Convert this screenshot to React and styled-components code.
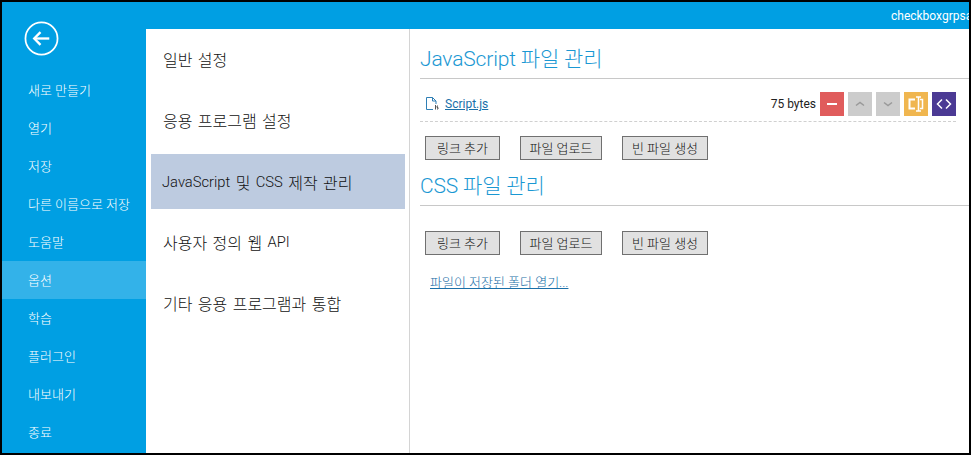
import React from 'react';
import styled, { createGlobalStyle } from 'styled-components';

const GlobalStyle = createGlobalStyle`
    html, body {
        margin: 0;
        padding: 0;
        background: #000;
    }
    body {
        font-family: Roboto, "Noto Sans CJK KR", sans-serif;
    }
    * {
        box-sizing: border-box;
    }
`;

const Frame = styled.div`
    width: 971px;
    height: 455px;
    padding: 2px;
    background: #000;
    overflow: hidden;
`;

const Window = styled.div`
    width: 100%;
    height: 100%;
    display: flex;
    background: #fff;
    overflow: hidden;
`;

const Sidebar = styled.nav`
    width: 144px;
    flex: none;
    background: #009fe3;
    display: flex;
    flex-direction: column;
`;

const BackWrap = styled.div`
    height: 69px;
    padding: 19px 0 0 22px;
`;

const BackButton = styled.button`
    width: 35px;
    height: 35px;
    padding: 0;
    background: none;
    border: none;
    display: block;
`;

const SideItem = styled.div`
    height: 38px;
    padding: 0 0 2px 26px;
    display: flex;
    align-items: center;
    color: #fff;
    font-size: 13px;
    font-weight: 300;
    background: ${props => (props.active ? '#33b2e9' : 'transparent')};
`;

const Main = styled.div`
    flex: 1;
    min-width: 0;
    display: flex;
    flex-direction: column;
`;

const TopBar = styled.div`
    height: 27px;
    flex: none;
    background: #009fe3;
    color: #fff;
    font-size: 12px;
    white-space: nowrap;
    overflow: hidden;
    padding: 6px 0 0 745px;
    line-height: 16px;
`;

const Body = styled.div`
    flex: 1;
    display: flex;
    min-height: 0;
`;

const SettingsNav = styled.div`
    width: 264px;
    flex: none;
    border-right: 1px solid #d4d4d4;
    padding: 3px 4px 0 5px;
    display: flex;
    flex-direction: column;
    gap: 6px;
`;

const NavItem = styled.div`
    height: 55px;
    padding: 0 0 ${props => (props.selected ? '0' : '2px')} ${props => (props.selected ? '11px' : '12px')};
    display: flex;
    align-items: center;
    font-size: 16px;
    font-weight: 300;
    word-spacing: 1.5px;
    white-space: pre;
    color: #111;
    background: ${props => (props.selected ? '#bdcbe0' : 'transparent')};
`;

const Latin = styled.span`
    font-size: 0.92em;
`;

const Content = styled.div`
    flex: 1;
    min-width: 0;
    padding: 17px 0 0 10px;
`;

const Heading = styled.h2`
    margin: 0;
    height: 33px;
    font-size: 21px;
    font-weight: 300;
    line-height: 26px;
    letter-spacing: -0.15px;
    color: #1b98d3;
    border-bottom: 1px solid #c8c8c8;
`;

const FileRow = styled.div`
    height: 43px;
    margin-right: 13px;
    padding: 13px 0 5px 5px;
    display: flex;
    align-items: center;
    justify-content: space-between;
    border-bottom: 1px dashed #d0d0d0;
`;

const FileName = styled.div`
    display: flex;
    align-items: center;
    gap: 5px;
`;

const FileLink = styled.a`
    color: #1a6fa8;
    text-decoration: underline;
    font-size: 12px;
`;

const FileTools = styled.div`
    display: flex;
    align-items: center;
    gap: 4px;
`;

const Bytes = styled.span`
    color: #222;
    font-size: 12px;
`;

const ToolButton = styled.button`
    width: 24px;
    height: 24px;
    padding: 0;
    border: none;
    display: flex;
    align-items: center;
    justify-content: center;
    background: ${props => props.color};
`;

const ButtonRow = styled.div`
    display: flex;
    gap: 20px;
    padding: ${props => props.pad};
`;

const ActionButton = styled.button`
    height: 24px;
    width: ${props => props.w}px;
    padding: 0;
    background: #e1e1e1;
    border: 1px solid #707070;
    font-family: inherit;
    font-size: 13px;
    font-weight: 300;
    color: #111;
    line-height: 1;
`;

const FolderLink = styled.a`
    display: block;
    margin: 17px 0 0 10px;
    color: #1a6fa8;
    font-size: 13px;
    font-weight: 300;
    text-decoration: underline;
`;

const sideItems = ['새로 만들기', '열기', '저장', '다른 이름으로 저장', '도움말', '옵션', '학습', '플러그인', '내보내기', '종료'];

const Buttons = ({ pad }) => (
    <ButtonRow pad={pad}>
        <ActionButton w={75}>링크 추가</ActionButton>
        <ActionButton w={82}>파일 업로드</ActionButton>
        <ActionButton w={86}>빈 파일 생성</ActionButton>
    </ButtonRow>
);

const App = () => (
    <Frame>
        <GlobalStyle />
        <Window>
            <Sidebar>
                <BackWrap>
                    <BackButton aria-label="back">
                        <svg width="35" height="35" viewBox="0 0 36 36" fill="none">
                            <circle cx="18" cy="18" r="16.5" stroke="#fff" strokeWidth="1.8" />
                            <path d="M26 18H11" stroke="#fff" strokeWidth="2.4" />
                            <path d="M17 11.5L10.5 18l6.5 6.5" stroke="#fff" strokeWidth="2.4" />
                        </svg>
                    </BackButton>
                </BackWrap>
                {sideItems.map(item => (
                    <SideItem key={item} active={item === '옵션'}>{item}</SideItem>
                ))}
            </Sidebar>
            <Main>
                <TopBar>checkboxgrpsample</TopBar>
                <Body>
                    <SettingsNav>
                        <NavItem>일반 설정</NavItem>
                        <NavItem>응용 프로그램 설정</NavItem>
                        <NavItem selected><Latin>JavaScript</Latin> 및 <Latin>CSS</Latin> 제작 관리</NavItem>
                        <NavItem>사용자 정의 웹 <Latin>API</Latin></NavItem>
                        <NavItem>기타 응용 프로그램과 통합</NavItem>
                    </SettingsNav>
                    <Content>
                        <Heading>JavaScript 파일 관리</Heading>
                        <FileRow>
                            <FileName>
                                <svg width="15" height="16" viewBox="0 0 15 16" fill="none">
                                    <path d="M1.5 1.5h6l3.5 3.5v3M7.5 1.5V5H11M1.5 1.5v12H8" stroke="#2f7fb5" />
                                    <path d="M10.5 9v4.5M13 10h-1v1.5h1V13h-1" stroke="#555" />
                                </svg>
                                <FileLink href="#">Script.js</FileLink>
                            </FileName>
                            <FileTools>
                                <Bytes>75 bytes</Bytes>
                                <ToolButton color="#e05c5c">
                                    <svg width="12" height="12" viewBox="0 0 12 12"><path d="M1 6h10" stroke="#fff" strokeWidth="2" /></svg>
                                </ToolButton>
                                <ToolButton color="#cccccc">
                                    <svg width="12" height="12" viewBox="0 0 12 12" fill="none"><path d="M2 7.5L6 4.5l4 3" stroke="#999" strokeWidth="1.5" /></svg>
                                </ToolButton>
                                <ToolButton color="#cccccc">
                                    <svg width="12" height="12" viewBox="0 0 12 12" fill="none"><path d="M2 4.5L6 7.5l4-3" stroke="#999" strokeWidth="1.5" /></svg>
                                </ToolButton>
                                <ToolButton color="#f0b64f">
                                    <svg width="18" height="18" viewBox="0 0 18 18" fill="none"><path d="M8 4.5H2.5v9H8" stroke="#fff" strokeWidth="2" /><path d="M11.5 2v14M9 2h5M9 16h5" stroke="#fff" strokeWidth="1.5" /><path d="M13 4.5h2.5v9H13" stroke="#fff" strokeWidth="1.5" /></svg>
                                </ToolButton>
                                <ToolButton color="#4b3a94">
                                    <svg width="16" height="12" viewBox="0 0 16 12" fill="none"><path d="M6 1.5L1.5 6 6 10.5M10 1.5L14.5 6 10 10.5" stroke="#fff" strokeWidth="1.5" /></svg>
                                </ToolButton>
                            </FileTools>
                        </FileRow>
                        <Buttons pad="14px 0 13px 5px" />
                        <Heading>CSS 파일 관리</Heading>
                        <Buttons pad="25px 0 0 5px" />
                        <FolderLink href="#">파일이 저장된 폴더 열기...</FolderLink>
                    </Content>
                </Body>
            </Main>
        </Window>
    </Frame>
);

export default App;
